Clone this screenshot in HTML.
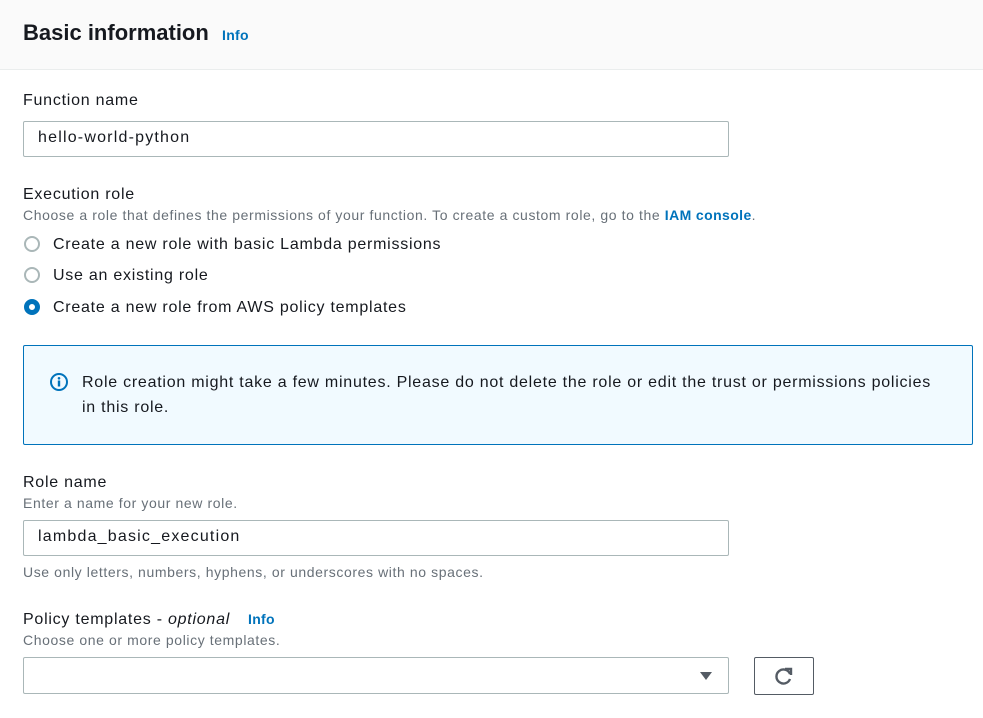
<!DOCTYPE html>
<html><head><meta charset="utf-8"><style>
body{margin:0;width:983px;height:718px;background:#fff;font-family:"Liberation Sans",Arial,sans-serif;color:#16191f;position:relative;overflow:hidden}
.a{position:absolute;white-space:nowrap}
.hdr{position:absolute;left:0;top:0;width:983px;height:69px;background:#fafafa;border-bottom:1px solid #eaeded}
.lbl{font-size:16px;line-height:20px;letter-spacing:0.75px}
.desc{font-size:14px;color:#687078;line-height:18px;letter-spacing:0.6px}
.inp{position:absolute;left:23px;width:706px;height:36px;border:1px solid #aab7b8;border-radius:2px;box-sizing:border-box}
.inp span{position:absolute;left:14px;top:7px;font-size:16px;letter-spacing:1.2px}
.radio{position:absolute;left:24px;width:16px;height:16px;border:2px solid #aab7b8;border-radius:50%;box-sizing:border-box}
.info{color:#0073bb;font-weight:bold;font-size:14px;letter-spacing:0.3px}
</style></head><body>
<div class="hdr"></div>
<div class="a" style="left:23px;top:19px;font-size:22px;font-weight:bold;line-height:28px">Basic information</div>
<div class="a info" style="left:222px;top:27px">Info</div>

<div class="a lbl" style="left:23px;top:91px">Function name</div>
<div class="inp" style="top:121px"><span>hello-world-python</span></div>

<div class="a lbl" style="left:23px;top:185px">Execution role</div>
<div class="a desc" style="left:23px;top:206px">Choose a role that defines the permissions of your function. To create a custom role, go to the <b style="color:#0073bb;letter-spacing:0.4px">IAM console</b>.</div>
<div class="radio" style="top:236px"></div>
<div class="a lbl" style="left:53px;top:235px">Create a new role with basic Lambda permissions</div>
<div class="radio" style="top:267px"></div>
<div class="a lbl" style="left:53px;top:266px">Use an existing role</div>
<div class="radio" style="top:299px;border:5px solid #0073bb"></div>
<div class="a lbl" style="left:53px;top:298px">Create a new role from AWS policy templates</div>

<div style="position:absolute;left:23px;top:345px;width:950px;height:100px;box-sizing:border-box;border:1px solid #0073bb;border-radius:2px;background:#f1faff"></div>
<svg class="a" style="left:49px;top:372px" width="20" height="20" viewBox="0 0 20 20"><circle cx="10" cy="10" r="8" fill="none" stroke="#0073bb" stroke-width="2"/><circle cx="10" cy="6.3" r="1.3" fill="#0073bb"/><rect x="8.8" y="8.5" width="2.4" height="6" fill="#0073bb"/></svg>
<div class="a lbl" style="left:82px;top:370px;line-height:25px;white-space:normal;width:860px">Role creation might take a few minutes. Please do not delete the role or edit the trust or permissions policies in this role.</div>

<div class="a lbl" style="left:23px;top:473px">Role name</div>
<div class="a desc" style="left:23px;top:494px">Enter a name for your new role.</div>
<div class="inp" style="top:520px"><span>lambda_basic_execution</span></div>
<div class="a desc" style="left:23px;top:563px">Use only letters, numbers, hyphens, or underscores with no spaces.</div>

<div class="a lbl" style="left:23px;top:610px">Policy templates - <i>optional</i></div>
<div class="a info" style="left:248px;top:611px">Info</div>
<div class="a desc" style="left:23px;top:631px">Choose one or more policy templates.</div>
<div class="inp" style="top:657px;height:37px"></div>
<svg class="a" style="left:699px;top:671px" width="14" height="10"><path d="M1 1H13L7 9Z" fill="#545b64"/></svg>
<div style="position:absolute;left:754px;top:657px;width:60px;height:38px;box-sizing:border-box;border:1px solid #545b64;border-radius:2px"></div>
<svg class="a" style="left:773px;top:665px" width="22" height="22" viewBox="0 0 22 22"><path d="M17 9A7 7 0 1 0 17 14" fill="none" stroke="#545b64" stroke-width="2.4"/><path d="M12 4H18V10" fill="none" stroke="#545b64" stroke-width="2.4"/></svg>
</body></html>
